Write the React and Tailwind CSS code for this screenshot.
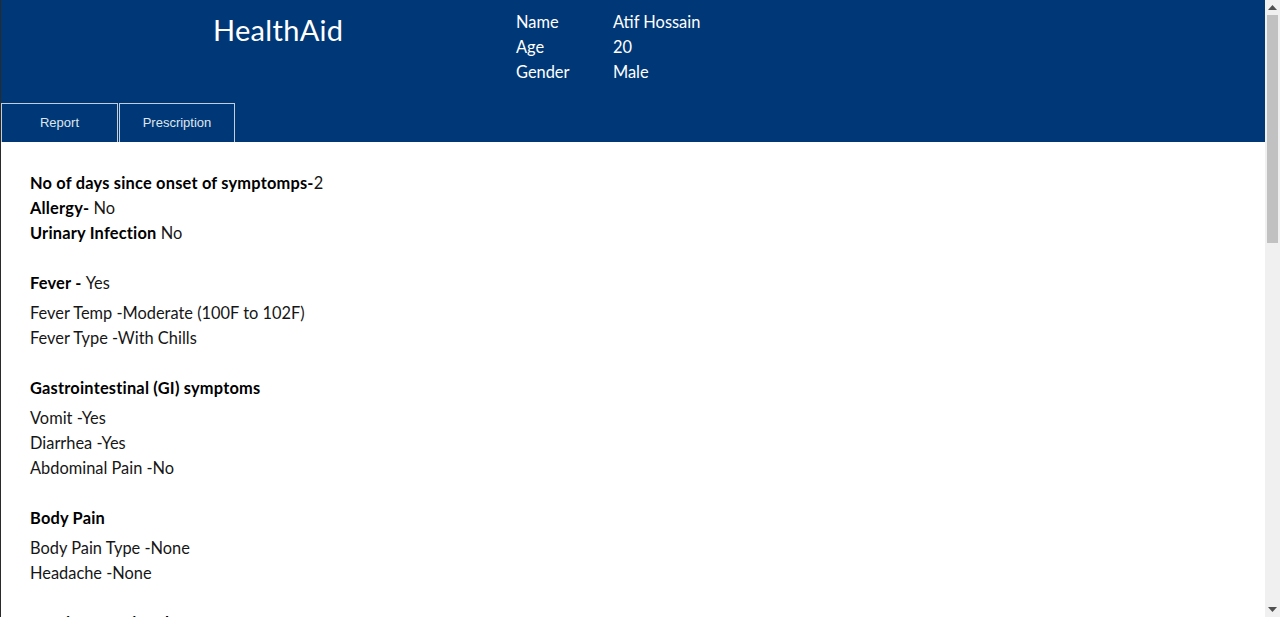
import React from "react";

const sections = [
  {
    heading: "Fever - ",
    value: "Yes",
    items: ["Fever Temp -Moderate (100F to 102F)", "Fever Type -With Chills"],
  },
  {
    heading: "Gastrointestinal (GI) symptoms",
    items: ["Vomit -Yes", "Diarrhea -Yes", "Abdominal Pain -No"],
  },
  {
    heading: "Body Pain",
    items: ["Body Pain Type -None", "Headache -None"],
  },
  {
    heading: "Respiratory Disorders",
    items: ["Cough -No", "Sore Throat -No", "Shortness of Breath -No"],
  },
  {
    heading: "Skin",
    items: ["Rash -No", "Itching -No"],
  },
  {
    heading: "Other Symptoms",
    items: ["Fatigue -Yes", "Loss of Appetite -Yes", "Dizziness -No"],
  },
];

function Scrollbar() {
  return (
    <div className="w-[15px] shrink-0 bg-[#f0f0f0] flex flex-col items-center">
      <div className="h-[15px] w-full flex items-center justify-center">
        <svg width="9" height="5" viewBox="0 0 9 5">
          <path d="M0 5 L4.5 0 L9 5 Z" fill="#505050" />
        </svg>
      </div>
      <div className="w-[11px] h-[228px] bg-[#c1c1c1]" />
      <div className="flex-1" />
      <div className="h-[15px] w-full flex items-center justify-center">
        <svg width="9" height="5" viewBox="0 0 9 5">
          <path d="M0 0 L9 0 L4.5 5 Z" fill="#505050" />
        </svg>
      </div>
    </div>
  );
}

export default function App() {
  return (
    <div
      className="h-screen flex overflow-hidden border-l border-[#2a2a2a] bg-white text-[#161616]"
      style={{ fontFamily: "Lato, 'Open Sans', sans-serif" }}
    >
      <div className="flex-1 min-w-0 overflow-hidden">
        <header className="bg-[#003877] h-[142px] flex flex-col justify-between">
          <div className="flex">
            <div className="w-[515px] pl-[212px] pt-[12px]">
              <h1 className="text-[29px] leading-[36px] text-white tracking-[0.3px]">
                HealthAid
              </h1>
            </div>
            <div className="pt-[9px] text-[16.4px] leading-[25px] text-white">
              <div className="flex">
                <span className="w-[97px]">Name</span>
                <span>Atif Hossain</span>
              </div>
              <div className="flex">
                <span className="w-[97px]">Age</span>
                <span>20</span>
              </div>
              <div className="flex">
                <span className="w-[97px]">Gender</span>
                <span>Male</span>
              </div>
            </div>
          </div>
          <div
            className="flex gap-[1px] text-[13px] text-[#dfe6ef]"
            style={{ fontFamily: "'Liberation Sans', Arial, sans-serif" }}
          >
            <button className="w-[117px] h-[39px] border border-b-0 border-[#c3cedc] bg-[#003877]">
              Report
            </button>
            <button className="w-[116px] h-[39px] border border-b-0 border-[#c3cedc] bg-[#003877]">
              Prescription
            </button>
          </div>
        </header>

        <main className="pl-[29px] pt-[28px] pb-[40px] text-[16.4px] leading-[25px]">
          <div>
            <p>
              <span className="font-bold tracking-[0.2px] text-black">
                No of days since onset of symptomps-
              </span>
              2
            </p>
            <p>
              <span className="font-bold tracking-[0.2px] text-black">Allergy-</span> No
            </p>
            <p>
              <span className="font-bold tracking-[0.2px] text-black">Urinary Infection</span> No
            </p>
          </div>

          {sections.map((s) => (
            <section key={s.heading} className="mt-[25px]">
              <p className="mb-[5px]">
                <span className="font-bold tracking-[0.2px] text-black">{s.heading}</span>
                {s.value ? " " + s.value : null}
              </p>
              {s.items.map((it) => (
                <p key={it}>{it}</p>
              ))}
            </section>
          ))}
        </main>
      </div>
      <Scrollbar />
    </div>
  );
}
